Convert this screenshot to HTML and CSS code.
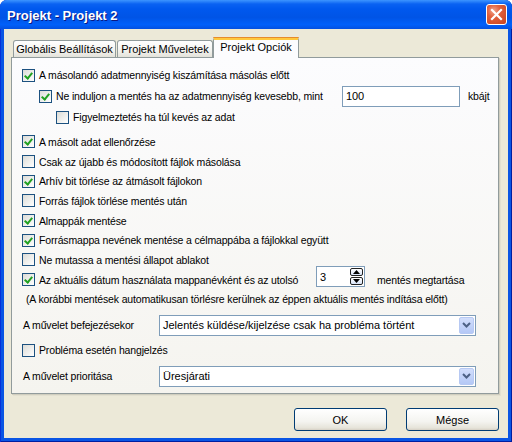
FILE: index.html
```html
<!DOCTYPE html>
<html lang="hu">
<head>
  <meta charset="UTF-8" />
  <title>Projekt - Projekt 2</title>
  <link rel="stylesheet" href="styles.css">
</head>
<body>

  <div class="window">
    <div class="titlebar">
      <span class="title">Projekt - Projekt 2</span>
      <div class="close-btn">
        <svg width="13" height="13" viewBox="0 0 13 13"><path d="M2 2 L11 11 M11 2 L2 11" stroke="#fff" stroke-width="2.2" stroke-linecap="square"/></svg>
      </div>
    </div>

    <div class="client">
      <div class="tabs">
        <div class="tab tab-global">Globális Beállítások</div>
        <div class="tab tab-ops">Projekt Műveletek</div>
        <div class="tab tab-opts active">Projekt Opciók</div>
      </div>

      <div class="panel">
        <!-- adatmennyiseg -->
        <div class="row row-first">
          <span class="check on"></span>
          <span>A másolandó adatmennyiség kiszámítása másolás előtt</span>
        </div>
        <div class="row row-input indent1">
          <span class="check on"></span>
          <span class="label-min">Ne induljon a mentés ha az adatmennyiség kevesebb, mint</span>
          <div class="textbox kb-box">100</div>
          <span class="unit">kbájt</span>
        </div>
        <div class="row indent2">
          <span class="check"></span>
          <span>Figyelmeztetés ha túl kevés az adat</span>
        </div>

        <div class="row row-gap">
          <span class="check on"></span>
          <span>A másolt adat ellenőrzése</span>
        </div>
        <div class="row">
          <span class="check"></span>
          <span>Csak az újabb és módosított fájlok másolása</span>
        </div>
        <div class="row">
          <span class="check on"></span>
          <span>Arhív bit törlése az átmásolt fájlokon</span>
        </div>
        <div class="row">
          <span class="check"></span>
          <span>Forrás fájlok törlése mentés után</span>
        </div>
        <div class="row">
          <span class="check on"></span>
          <span>Almappák mentése</span>
        </div>
        <div class="row">
          <span class="check on"></span>
          <span>Forrásmappa nevének mentése a célmappába a fájlokkal együtt</span>
        </div>
        <div class="row">
          <span class="check"></span>
          <span>Ne mutassa a mentési állapot ablakot</span>
        </div>
        <div class="row">
          <span class="check on"></span>
          <span class="label-date">Az aktuális dátum használata mappanévként és az utolsó</span>
          <div class="textbox spin-box">
            <span>3</span>
            <div class="spin">
              <div class="spin-btn"><svg width="7" height="4" viewBox="0 0 7 4"><path d="M0 4 L3.5 0 L7 4 Z" fill="#000"/></svg></div>
              <div class="spin-btn"><svg width="7" height="4" viewBox="0 0 7 4"><path d="M0 0 L3.5 4 L7 0 Z" fill="#000"/></svg></div>
            </div>
          </div>
          <span class="unit-keep">mentés megtartása</span>
        </div>
        <div class="row note">(A korábbi mentések automatikusan törlésre kerülnek az éppen aktuális mentés indítása előtt)</div>

        <div class="row row-combo">
          <span class="combo-label">A művelet befejezésekor</span>
          <div class="combo">
            <span>Jelentés küldése/kijelzése csak ha probléma történt</span>
            <div class="combo-btn"><svg width="9" height="6" viewBox="0 0 9 6"><path d="M1 1 L4.5 4.5 L8 1" stroke="#4D6185" stroke-width="2" fill="none"/></svg></div>
          </div>
        </div>
        <div class="row row-sound">
          <span class="check"></span>
          <span>Probléma esetén hangjelzés</span>
        </div>
        <div class="row row-combo">
          <span class="combo-label">A művelet prioritása</span>
          <div class="combo">
            <span>Üresjárati</span>
            <div class="combo-btn"><svg width="9" height="6" viewBox="0 0 9 6"><path d="M1 1 L4.5 4.5 L8 1" stroke="#4D6185" stroke-width="2" fill="none"/></svg></div>
          </div>
        </div>
      </div>

      <div class="buttons">
        <button class="xp-btn">OK</button>
        <button class="xp-btn">Mégse</button>
      </div>
    </div>
  </div>

</body>
</html>
```

FILE: styles.css
```css
body {
  margin: 0;
  background: #ffffff;
  font-family: 'Liberation Sans', Arial, sans-serif;
  font-size: 11px;
  color: #000;
  overflow: hidden;
}
.window {
  width: 512px;
  height: 442px;
  box-sizing: border-box;
  background: #0A55E4;
  border-radius: 7px 7px 0 0;
  box-shadow: inset 1px 0 0 #0831D9, inset -1px 0 0 #001EA0, inset 0 -1px 0 #001EA0;
  display: flex;
  flex-direction: column;
}
.titlebar {
  height: 29px;
  flex: none;
  display: flex;
  align-items: center;
  padding: 0 5px 0 7px;
  border-radius: 7px 7px 0 0;
  background: linear-gradient(#3D95FF 0, #0A62F2 4px, #0058EE 9px, #0054E6 60%, #0060FA 85%, #0350E0 100%);
}
.title {
  flex: 1;
  color: #fff;
  font-size: 13px;
  font-weight: bold;
  text-shadow: 1px 1px 0 #0A1883;
  padding-top: 1px;
}
.close-btn {
  width: 19px;
  height: 19px;
  border: 1px solid #fff;
  border-radius: 3px;
  background: radial-gradient(circle at 35% 30%, #F0A48C 0, #E2613D 35%, #C7421E 100%);
  display: flex;
  align-items: center;
  justify-content: center;
}
.client {
  flex: 1;
  margin: 0 4px 4px 4px;
  background: #ECE9D8;
  padding: 8px 0 0 7px;
}
.tabs {
  height: 20px;
  display: flex;
  align-items: flex-end;
  padding-left: 2px;
  position: relative;
  z-index: 1;
}
.tab {
  height: 17px;
  box-sizing: border-box;
  border: 1px solid #919B9C;
  border-bottom: none;
  border-radius: 3px 3px 0 0;
  background: linear-gradient(#FFFFFF, #F3F3EF 60%, #E3E2DA);
  text-align: center;
  line-height: 17px;
  margin-right: 1px;
  white-space: nowrap;
}
.tab-global { width: 103px; }
.tab-ops { width: 96px; }
.tab-opts { width: 86px; }
.tab.active {
  height: 21px;
  margin-bottom: -1px;
  margin-left: -1px;
  background: #FCFCFE;
  border-top: 3px solid #FFC83C;
  line-height: 14px;
  position: relative;
}
.tab.active::before {
  content: "";
  position: absolute;
  top: -3px;
  left: -1px;
  right: -1px;
  height: 1px;
  background: #E68B2C;
  border-radius: 2px 2px 0 0;
}
.panel {
  width: 488px;
  height: 337px;
  box-sizing: border-box;
  border: 1px solid #919B9C;
  background: linear-gradient(#FCFCFE, #F5F4EF);
  box-shadow: 1px 1px 0 #D0CEBF, 2px 2px 0 #E3E0D0;
  padding: 7px 0 0 10px;
  font-size: 10.5px;
  letter-spacing: -0.15px;
}
.row {
  height: 19.7px;
  display: flex;
  align-items: center;
  white-space: nowrap;
}
.row-first { height: 20px; }
.row-input { height: 22px; }
.row-gap { margin-top: 5px; }
.indent1 { padding-left: 17px; }
.indent2 { padding-left: 34px; height: 20px; }
.check {
  width: 13px;
  height: 13px;
  box-sizing: border-box;
  flex: none;
  border: 1px solid #1C5180;
  background: linear-gradient(135deg, #DCDCD7, #FFFFFF);
  margin-right: 4px;
  position: relative;
}
.check.on::after {
  content: "";
  position: absolute;
  left: 3px;
  top: 1px;
  width: 3px;
  height: 6px;
  border: solid #21A121;
  border-width: 0 2px 2px 0;
  transform: rotate(40deg);
}
.textbox {
  height: 21px;
  box-sizing: border-box;
  border: 1px solid #7F9DB9;
  background: #fff;
  display: flex;
  align-items: center;
  padding-left: 3px;
  font-size: 11px;
}
.label-min { width: 286px; }
.kb-box { width: 118px; }
.unit { margin-left: 8px; }
.label-date { width: 277px; }
.spin-box {
  width: 49px;
  justify-content: space-between;
  padding-right: 1px;
  margin-top: -6px;
}
.spin {
  display: flex;
  flex-direction: column;
  gap: 1px;
}
.spin-btn {
  width: 13px;
  height: 8px;
  box-sizing: border-box;
  border: 1px solid #222;
  border-radius: 2px;
  background: linear-gradient(#FFFFFF, #D8E4F8);
  display: flex;
  align-items: center;
  justify-content: center;
}
.unit-keep { margin-left: 12px; }
.note { padding-left: 4px; }
.row-combo {
  height: 22px;
  margin-top: 5px;
}
.row-sound { margin-top: 4px; height: 20px; }
.combo-label {
  width: 136px;
  padding-left: 1px;
}
.combo {
  width: 317px;
  height: 21px;
  box-sizing: border-box;
  border: 1px solid #7F9DB9;
  background: #fff;
  display: flex;
  align-items: center;
  justify-content: space-between;
  padding: 0 1px 0 3px;
  font-size: 11px;
  letter-spacing: 0;
}
.combo-btn {
  width: 15px;
  height: 17px;
  box-sizing: border-box;
  border: 1px solid #B7C9F3;
  border-radius: 2px;
  background: linear-gradient(#D2DEFC, #B4C8F6);
  display: flex;
  align-items: center;
  justify-content: center;
}
.buttons {
  width: 488px;
  display: flex;
  justify-content: flex-end;
  gap: 19px;
  margin-top: 14px;
}
.xp-btn {
  width: 93px;
  height: 23px;
  border: 1px solid #003C74;
  border-radius: 3px;
  background: linear-gradient(#FFFFFF, #F4F4F0 60%, #E6E4DA 90%, #D6D0C5);
  font-family: 'Liberation Sans', Arial, sans-serif;
  font-size: 11px;
  color: #000;
  padding: 0;
}
```
